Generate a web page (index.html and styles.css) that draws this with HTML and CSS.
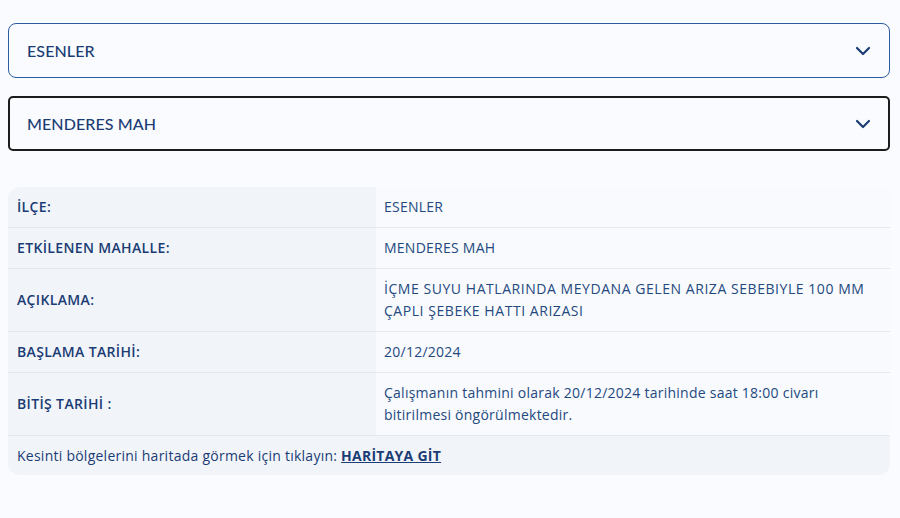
FILE: index.html
```html
<!DOCTYPE html>
<html lang="tr">
<head>
  <meta charset="UTF-8" />
  <meta name="viewport" content="width=device-width, initial-scale=1.0" />
  <title>Su Kesintileri</title>
  <link rel="stylesheet" href="styles.css">
</head>
<body>
  <div class="page">
    <div class="select select-district">
      <span class="select-value">ESENLER</span>
      <svg class="chevron" width="16" height="10" viewBox="0 0 16 10"><path d="M2 2l6 6 6-6" fill="none" stroke="currentColor" stroke-width="2.2" stroke-linecap="round" stroke-linejoin="round"/></svg>
    </div>
    <div class="select select-active">
      <span class="select-value">MENDERES MAH</span>
      <svg class="chevron" width="16" height="10" viewBox="0 0 16 10"><path d="M2 2l6 6 6-6" fill="none" stroke="currentColor" stroke-width="2.2" stroke-linecap="round" stroke-linejoin="round"/></svg>
    </div>

    <table class="info">
      <tbody>
        <tr>
          <th>İLÇE:</th>
          <td>ESENLER</td>
        </tr>
        <tr>
          <th>ETKİLENEN MAHALLE:</th>
          <td>MENDERES MAH</td>
        </tr>
        <tr>
          <th>AÇIKLAMA:</th>
          <td class="caps">İÇME SUYU HATLARINDA MEYDANA GELEN ARIZA SEBEBIYLE 100 MM ÇAPLI ŞEBEKE HATTI ARIZASI</td>
        </tr>
        <tr>
          <th>BAŞLAMA TARİHİ:</th>
          <td>20/12/2024</td>
        </tr>
        <tr>
          <th>BİTİŞ TARİHİ :</th>
          <td>Çalışmanın tahmini olarak 20/12/2024 tarihinde saat 18:00 civarı bitirilmesi öngörülmektedir.</td>
        </tr>
        <tr class="row-foot">
          <td colspan="2">Kesinti bölgelerini haritada görmek için tıklayın: <a href="#">HARİTAYA GİT</a></td>
        </tr>
      </tbody>
    </table>
  </div>
</body>
</html>
```

FILE: styles.css
```css
:root {
  --page-bg: #f9fbfe;
  --label-bg: #f1f5fa;
  --value-bg: #f8fafd;
  --line: #e3e8ef;
  --text-navy: #1b3c74;
  --text-value: #24497f;
  --border-blue: #2d5ba3;
  --border-dark: #1c1c1c;
}

* {
  box-sizing: border-box;
  margin: 0;
  padding: 0;
}

body {
  font-family: 'Open Sans', 'Noto Sans', sans-serif;
  background-color: var(--page-bg);
  color: var(--text-navy);
}

.page {
  padding: 23px 10px 40px 8px;
}

.select {
  display: flex;
  align-items: center;
  justify-content: space-between;
  height: 55px;
  padding: 0 18px 0 18px;
  background: var(--page-bg);
  font-family: 'Lato', sans-serif;
  font-size: 16px;
  font-weight: 500;
  letter-spacing: 0.1px;
}
.select-district {
  border: 1px solid var(--border-blue);
  border-radius: 8px;
  margin-bottom: 18px;
}
.select-active {
  border: 2px solid var(--border-dark);
  border-radius: 5px;
  padding-left: 17px;
  padding-right: 17px;
}
.chevron { color: var(--text-navy); }

table.info {
  width: 100%;
  margin-top: 36px;
  border-collapse: separate;
  border-spacing: 0;
  border-radius: 12px;
  overflow: hidden;
  background: var(--label-bg);
  font-size: 14px;
  letter-spacing: 0.25px;
}
.info th, .info td {
  text-align: left;
  vertical-align: middle;
  padding: 9px 8px;
  border-bottom: 1px solid var(--line);
  line-height: 22px;
}
.info th {
  width: 368px;
  background: var(--label-bg);
  font-weight: 600;
  padding-left: 9px;
  letter-spacing: 0.35px;
}
.info td {
  background: var(--value-bg);
  font-weight: 400;
  color: var(--text-value);
  padding-right: 14px;
}
.info td.caps { letter-spacing: 0.55px; }
.info tr.row-foot td {
  background: var(--label-bg);
  border-bottom: none;
  padding: 8px 9px;
  height: 39px;
  color: var(--text-navy);
}
.info a {
  color: var(--text-navy);
  font-weight: 700;
}
```
